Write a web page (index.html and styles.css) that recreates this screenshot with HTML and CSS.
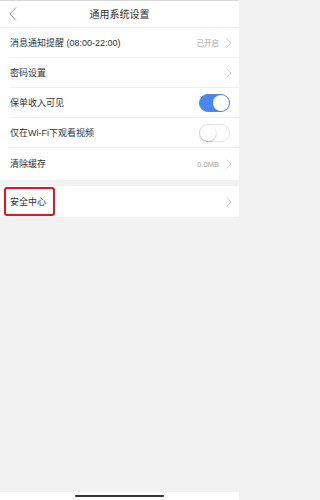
FILE: index.html
```html
<!DOCTYPE html>
<html lang="zh-CN">
<head>
<meta charset="utf-8">
<title>通用系统设置</title>
<link rel="stylesheet" href="styles.css">
</head>
<body>
<div class="page">
  <header class="header">
    <svg class="back" width="8" height="14" viewBox="0 0 8 14"><polyline points="7,0.5 1,7 7,13.5" fill="none" stroke="#8a8a8a" stroke-width="0.9"/></svg>
    <div class="title">通用系统设置</div>
  </header>

  <section class="group">
    <div class="row">
      <span class="label">消息通知提醒 (08:00-22:00)</span>
      <span class="value">已开启</span>
      <svg class="chev" width="6" height="10" viewBox="0 0 6 10"><polyline points="0.5,0.5 5,5 0.5,9.5" fill="none" stroke="#cfcfcf" stroke-width="0.9"/></svg>
    </div>
    <div class="row">
      <span class="label">密码设置</span>
      <svg class="chev" width="6" height="10" viewBox="0 0 6 10"><polyline points="0.5,0.5 5,5 0.5,9.5" fill="none" stroke="#cfcfcf" stroke-width="0.9"/></svg>
    </div>
    <div class="row">
      <span class="label">保单收入可见</span>
      <span class="toggle on"><span class="knob"></span></span>
    </div>
    <div class="row">
      <span class="label">仅在Wi-Fi下观看视频</span>
      <span class="toggle"><span class="knob"></span></span>
    </div>
    <div class="row last">
      <span class="label">清除缓存</span>
      <span class="value">0.0MB</span>
      <svg class="chev" width="6" height="10" viewBox="0 0 6 10"><polyline points="0.5,0.5 5,5 0.5,9.5" fill="none" stroke="#cfcfcf" stroke-width="0.9"/></svg>
    </div>
  </section>

  <section class="group second">
    <div class="row last security">
      <span class="label boxed">安全中心</span>
      <svg class="chev" width="6" height="10" viewBox="0 0 6 10"><polyline points="0.5,0.5 5,5 0.5,9.5" fill="none" stroke="#cfcfcf" stroke-width="0.9"/></svg>
    </div>
  </section>

  <div class="spacer"></div>
  <div class="home"><span class="home-bar"></span></div>
</div>
</body>
</html>
```
FILE: styles.css
```css
* { box-sizing: border-box; }
html, body { margin: 0; padding: 0; }
body {
  font-family: "Liberation Sans", "Noto Sans CJK SC", sans-serif;
  color: #333;
  background: #f2f2f2;
}
.page {
  width: 239px;
  min-height: 500px;
  display: flex;
  flex-direction: column;
  background: #f2f2f2;
}
.header {
  height: 28px;
  background: #fff;
  border-top: 1px solid #d9d9d9;
  border-bottom: 1px solid #eeeeee;
  display: flex;
  align-items: center;
  justify-content: center;
  position: relative;
}
.back {
  position: absolute;
  left: 9px;
  top: 6px;
}
.title {
  font-size: 10px;
  line-height: 12px;
  color: #333;
  margin-top: 1px;
}
.group {
  background: #fff;
  padding-left: 10px;
}
.group.second {
  margin-top: 6px;
  padding-left: 0;
}
.row {
  height: 30px;
  display: flex;
  align-items: center;
  border-bottom: 1px solid #f0f0f0;
  padding-right: 7px;
}
.row.last {
  border-bottom: none;
  height: 32px;
}
.row.security {
  height: 31px;
}
.label {
  font-size: 9px;
  line-height: 12px;
  color: #333;
  flex: 1;
}
.label.boxed {
  flex: 0 0 auto;
  align-self: stretch;
  margin: 1px auto 1px 4px;
  padding: 0 7px 0 4px;
  border: 2px solid #e8131b;
  border-radius: 3px;
  display: flex;
  align-items: center;
}
.value {
  font-size: 7.5px;
  color: #a6a6a6;
  margin-right: 7px;
}
.chev {
  display: block;
}
.toggle {
  width: 31px;
  height: 18px;
  border-radius: 9px;
  border: 1px solid #e3e3e3;
  background: #fff;
  position: relative;
  margin-right: 2px;
}
.toggle.on {
  background: #4a87ec;
  border-color: #4a87ec;
}
.knob {
  position: absolute;
  top: 0;
  left: 0;
  width: 16px;
  height: 16px;
  border-radius: 50%;
  background: #fff;
  box-shadow: 0 1px 2px rgba(0,0,0,0.25);
}
.toggle.on .knob {
  left: 13px;
  box-shadow: none;
}
.spacer { flex: 1; }
.home {
  height: 8px;
  background: #fff;
  display: flex;
  justify-content: center;
  align-items: center;
}
.home-bar {
  width: 89px;
  height: 2px;
  background: #333;
  border-radius: 1px;
}
```
